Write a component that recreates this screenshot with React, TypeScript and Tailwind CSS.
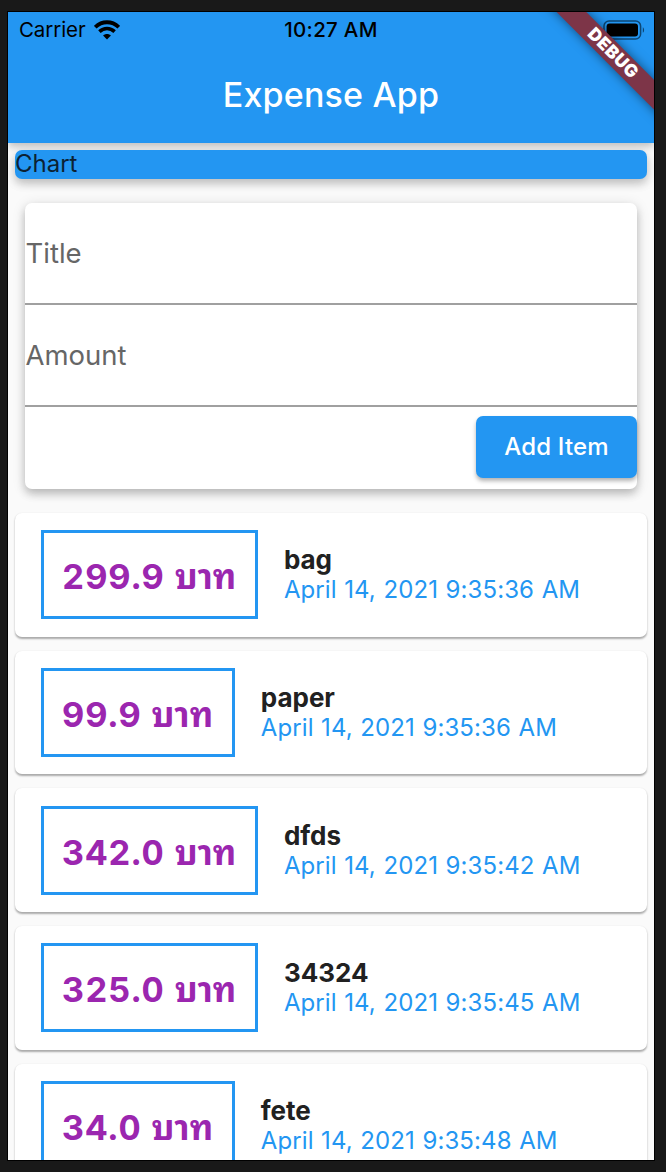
const transactions = [
  { title: "bag", amount: "299.9", date: "April 14, 2021 9:35:36 AM" },
  { title: "paper", amount: "99.9", date: "April 14, 2021 9:35:36 AM" },
  { title: "dfds", amount: "342.0", date: "April 14, 2021 9:35:42 AM" },
  { title: "34324", amount: "325.0", date: "April 14, 2021 9:35:45 AM" },
  { title: "fete", amount: "34.0", date: "April 14, 2021 9:35:48 AM" },
] as const;

function WifiIcon() {
  return (
    <svg viewBox="0 0 26 20" className="h-5 w-[26px]" fill="none" stroke="#000">
      <path d="M1.2 7.2C8 .6 18 .6 24.8 7.2" strokeWidth="3.8" />
      <path d="M5.4 11.6c4.4-4.1 10.8-4.1 15.2 0" strokeWidth="3.6" />
      <path d="M13 19.4l-3.9-4c2.2-2 5.6-2 7.8 0z" fill="#000" stroke="none" />
    </svg>
  );
}

function BatteryIcon() {
  return (
    <svg viewBox="0 0 42 20" className="h-5 w-[42px]" fill="none">
      <rect x="1" y="1" width="36.6" height="18" rx="5" stroke="#0d4673" strokeWidth="1.5" />
      <rect x="3.6" y="3.4" width="31.4" height="13.2" rx="3" fill="#000" />
      <path d="M39.8 7.2c1.7 1 1.7 4.6 0 5.6z" fill="#0d4673" />
    </svg>
  );
}

function StatusBar() {
  return (
    <div className="grid h-9 grid-cols-3 items-center pl-[11px] pr-[9px] text-black">
      <div className="flex items-center gap-2">
        <span className="text-[20.5px] tracking-[-0.1px]">Carrier</span>
        <WifiIcon />
      </div>
      <span className="pr-[2px] text-center text-[20.5px] font-medium tracking-[0.3px]">10:27 AM</span>
      <div className="flex justify-end">
        <BatteryIcon />
      </div>
    </div>
  );
}

function DebugBanner() {
  return (
    <div className="absolute left-[504px] top-[31px] flex h-[20.6px] w-[202px] rotate-45 items-center justify-center bg-[#7d3548] text-[17.5px] font-black tracking-[0.5px] text-white shadow-[0_0_11px_rgba(0,0,0,0.5)]">
      DEBUG
    </div>
  );
}

function Field({ label }: { label: string }) {
  return (
    <div className="flex h-[102px] items-center border-b-2 border-[#a0a0a0] pl-[0.5px] pt-0.5 text-[27.5px] text-[#666]">
      {label}
    </div>
  );
}

function NewTransaction() {
  return (
    <div className="mx-[17px] mt-6 h-[286px] rounded-[7px] bg-white shadow-[0_5px_9px_rgba(0,0,0,0.2),0_2px_14px_rgba(0,0,0,0.12)]">
      <Field label="Title" />
      <Field label="Amount" />
      <div className="flex justify-end pt-[9px]">
        <button className="h-[62px] w-[161px] rounded-[7px] bg-[#2396f2] text-[24px] font-medium tracking-[0.2px] text-white shadow-[0_3px_4px_rgba(0,0,0,0.3)]">
          Add Item
        </button>
      </div>
    </div>
  );
}

export default function App() {
  return (
    <div className="h-[1172px] w-[666px] bg-[#191919] px-2 pt-[12px] font-['Inter','Noto_Sans',sans-serif]">
      <div className="relative h-[1148px] w-[646px] overflow-hidden bg-[#fafafa] shadow-[0_0_0_1px_#000]">
        <header className="h-[131px] bg-[#2396f2] shadow-[0_3px_8px_rgba(0,0,0,0.25)]">
          <StatusBar />
          <h1 className="mt-[25px] text-center text-[34px] font-medium leading-[44px] tracking-[0.2px] text-white">
            Expense App
          </h1>
        </header>

        <div className="mx-[7px] mt-[7px] h-[29px] rounded-[7px] bg-[#2396f2] text-[24px] leading-[28px] text-[#0c2233] shadow-[0_5px_9px_rgba(0,0,0,0.18),0_2px_14px_rgba(0,0,0,0.1)]">
          Chart
        </div>

        <NewTransaction />

        <div className="mx-[7px] mt-6 flex flex-col gap-[14.1px]">
          {transactions.map((tx) => (
            <div
              key={tx.title}
              className="flex h-[123.6px] shrink-0 items-start rounded-[7px] bg-white pl-[26px] pt-[17.3px] shadow-[0_1.5px_2px_rgba(0,0,0,0.32)]"
            >
              <div className="h-[89px] border-[3px] border-[#2396f2] pl-[18px] pr-[19px] text-[34.4px] font-bold leading-[81px] tabular-nums tracking-[0.9px] text-[#9b26af]">
                {tx.amount}
                <span className="ml-[10px] font-['Noto_Sans_Thai_Looped','Loma','Garuda','Waree','FreeSans','Noto_Serif_Thai',serif] tracking-normal">
                  บาท
                </span>
              </div>
              <div className="ml-[25.5px] pt-[15px]">
                <p className="text-[26px] font-bold leading-[30px] text-[#212121]">{tx.title}</p>
                <p className="text-[24px] leading-[30px] tracking-[0.1px] text-[#2396f2] [word-spacing:0.7px]">
                  {tx.date}
                </p>
              </div>
            </div>
          ))}
        </div>

        <DebugBanner />
      </div>
    </div>
  );
}
